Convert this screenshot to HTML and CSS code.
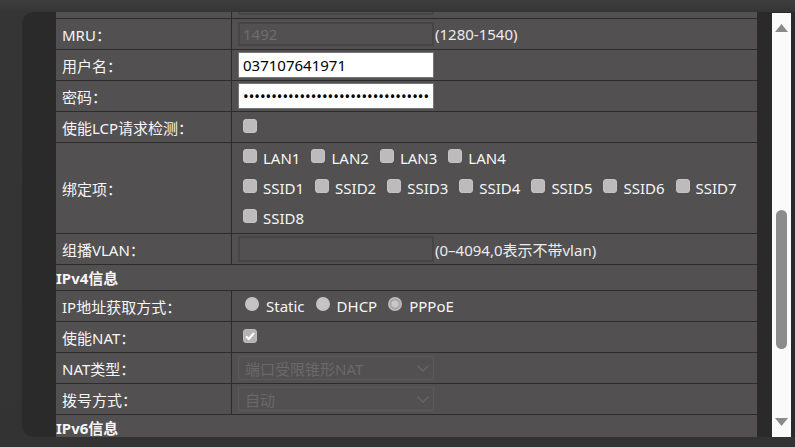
FILE: index.html
```html
<!DOCTYPE html>
<html>
<head>
<meta charset="utf-8">
<link rel="stylesheet" href="styles.css">
</head>
<body>
<div class="window">
  <div class="content">
    <div class="form">
      <div class="row">
        <div class="label">MTU：</div>
        <div class="value"><input class="txt disabled" type="text" value="1492" disabled><span class="hint">(576-1500)</span></div>
      </div>
      <div class="row">
        <div class="label">MRU：</div>
        <div class="value"><input class="txt disabled" type="text" value="1492" disabled><span class="hint">(1280-1540)</span></div>
      </div>
      <div class="row">
        <div class="label">用户名：</div>
        <div class="value"><input class="txt white" type="text" value="037107641971"></div>
      </div>
      <div class="row">
        <div class="label">密码：</div>
        <div class="value"><input class="txt white" type="password" value="abcdefghijabcdefghijabcdefghijabcdefghij"></div>
      </div>
      <div class="row">
        <div class="label">使能LCP请求检测：</div>
        <div class="value cbcell"><span class="cb"></span></div>
      </div>
      <div class="row tall">
        <div class="label">绑定项：</div>
        <div class="value bind">
          <div class="line">
            <span class="item"><span class="cb"></span>LAN1</span>
            <span class="item"><span class="cb"></span>LAN2</span>
            <span class="item"><span class="cb"></span>LAN3</span>
            <span class="item"><span class="cb"></span>LAN4</span>
          </div>
          <div class="line wrap">
            <span class="item"><span class="cb"></span>SSID1</span>
            <span class="item"><span class="cb"></span>SSID2</span>
            <span class="item"><span class="cb"></span>SSID3</span>
            <span class="item"><span class="cb"></span>SSID4</span>
            <span class="item"><span class="cb"></span>SSID5</span>
            <span class="item"><span class="cb"></span>SSID6</span>
            <span class="item"><span class="cb"></span>SSID7</span>
            <span class="item"><span class="cb"></span>SSID8</span>
          </div>
        </div>
      </div>
      <div class="row">
        <div class="label">组播VLAN：</div>
        <div class="value"><input class="txt disabled tall-input" type="text" value="" disabled><span class="hint">(0–4094,0表示不带vlan)</span></div>
      </div>
      <div class="heading">IPv4信息</div>
      <div class="row">
        <div class="label">IP地址获取方式：</div>
        <div class="value radios">
          <span class="ritem"><span class="radio"></span>Static</span>
          <span class="ritem"><span class="radio"></span>DHCP</span>
          <span class="ritem"><span class="radio on"></span>PPPoE</span>
        </div>
      </div>
      <div class="row">
        <div class="label">使能NAT：</div>
        <div class="value cbcell"><span class="cb checked"><svg width="14" height="14" viewBox="0 0 14 14"><path d="M3 7.2 L5.8 10 L11 4" fill="none" stroke="#ffffff" stroke-width="2"/></svg></span></div>
      </div>
      <div class="row">
        <div class="label">NAT类型：</div>
        <div class="value"><div class="select"><span>端口受限锥形NAT</span><svg width="12" height="7" viewBox="0 0 12 7"><path d="M0.5 0.5 L6 6 L11.5 0.5" fill="none" stroke="#676566" stroke-width="1.3"/></svg></div></div>
      </div>
      <div class="row">
        <div class="label">拨号方式：</div>
        <div class="value"><div class="select"><span>自动</span><svg width="12" height="7" viewBox="0 0 12 7"><path d="M0.5 0.5 L6 6 L11.5 0.5" fill="none" stroke="#676566" stroke-width="1.3"/></svg></div></div>
      </div>
      <div class="heading">IPv6信息</div>
      <div class="row">
        <div class="label">IP地址获取方式：</div>
        <div class="value"></div>
      </div>
    </div>
  </div>
  <div class="scrollbar">
    <svg class="arrow" width="13" height="8" viewBox="0 0 13 8"><path d="M6.5 0 L13 8 L0 8 Z" fill="#8a8a8a"/></svg>
    <div class="track"><div class="thumb"></div></div>
    <svg class="arrow" width="13" height="8" viewBox="0 0 13 8"><path d="M0 0 L13 0 L6.5 8 Z" fill="#8a8a8a"/></svg>
  </div>
</div>
</body>
</html>
```

FILE: styles.css
```css
html, body {
  margin: 0;
  padding: 0;
}
body {
  width: 795px;
  height: 447px;
  overflow: hidden;
  background: linear-gradient(#3e3e3e 0, #353535 12px, #333333 100%);
  padding: 12px 0 0 22px;
  box-sizing: border-box;
  font-family: "Noto Sans", "Noto Sans CJK SC", sans-serif;
  font-size: 15px;
  color: #f6f6f6;
}
.window {
  height: 425px;
  background: #2a2a2a;
  border-radius: 12px 0 0 12px;
  display: flex;
  padding-left: 34px;
}
.content {
  width: 701px;
  height: 425px;
  overflow: hidden;
  flex: none;
}
.form {
  margin-top: -24px;
  background: #525051;
}
.row {
  display: grid;
  grid-template-columns: 176px 1fr;
  border-bottom: 1px solid #2d2c2c;
  height: 30px;
}
.row.tall {
  height: 90px;
}
.label {
  border-right: 1px solid #2d2c2c;
  padding-left: 6px;
  display: flex;
  align-items: center;
  white-space: nowrap;
}
.value {
  padding-left: 6px;
  display: flex;
  align-items: center;
  white-space: nowrap;
}
.txt {
  box-sizing: border-box;
  width: 196px;
  height: 26px;
  margin: 0;
  font-family: "Noto Sans", "Noto Sans CJK SC", sans-serif;
  font-size: 15px;
  padding: 0 4px;
  outline: none;
  flex: none;
}
.txt.white {
  background: #ffffff;
  border: 1px solid #767676;
  color: #000000;
}
.txt.disabled {
  height: 24px;
  background: #525051;
  border: 2px solid #474546;
  color: #6f6d6e;
  padding-left: 3px;
}
.txt.tall-input {
  height: 26px;
}
.hint {
  margin-left: 1px;
  color: #ececec;
}
.cbcell {
  padding-left: 11px;
}
.cb {
  display: inline-block;
  box-sizing: border-box;
  width: 14px;
  height: 14px;
  background: #bcbcbc;
  border: 1px solid #c4c4c4;
  border-radius: 3px;
  position: relative;
  top: -1px;
  flex: none;
}
.cb svg {
  position: absolute;
  left: -1px;
  top: -1px;
}
.cb.checked {
  background: #b4b4b4;
  border-color: #bcbcbc;
}
.bind {
  flex-direction: column;
  align-items: flex-start;
  padding-left: 11px;
}
.line {
  display: flex;
  flex-wrap: wrap;
  width: 100%;
}
.item {
  display: inline-flex;
  align-items: center;
  height: 30px;
  margin-right: 11px;
}
.item .cb {
  margin-right: 6px;
  top: -2px;
}
.radios {
  padding-left: 13px;
}
.ritem {
  display: inline-flex;
  align-items: center;
  margin-right: 11px;
}
.radio {
  display: inline-block;
  box-sizing: border-box;
  width: 14px;
  height: 14px;
  border-radius: 50%;
  background: #c4c4c4;
  margin-right: 7px;
  position: relative;
  top: -2px;
}
.radio.on {
  background: radial-gradient(circle, #c8c8c8 0 3px, #a9a9a9 4px 5px, #bdbdbd 6px);
}
.select {
  box-sizing: border-box;
  width: 196px;
  height: 24px;
  border: 1px solid #5b595a;
  display: flex;
  align-items: center;
  justify-content: space-between;
  padding: 0 4px 0 6px;
  color: #6b696a;
}
.heading {
  height: 25px;
  border-bottom: 1px solid #2d2c2c;
  font-weight: bold;
  display: flex;
  align-items: center;
  padding-left: 0;
}
.scrollbar {
  width: 19px;
  margin-left: 15px;
  margin-top: 1px;
  background: #fafafa;
  display: flex;
  flex-direction: column;
  align-items: center;
  flex: none;
}
.arrow {
  flex: none;
  margin: 11px 0 0 0;
}
.arrow:last-child {
  margin: 0 0 11px 0;
}
.track {
  flex: 1;
  width: 11px;
  position: relative;
}
.thumb {
  position: absolute;
  left: 0;
  top: 178px;
  width: 11px;
  height: 139px;
  background: #8c8c8c;
  border-radius: 6px;
}
```
